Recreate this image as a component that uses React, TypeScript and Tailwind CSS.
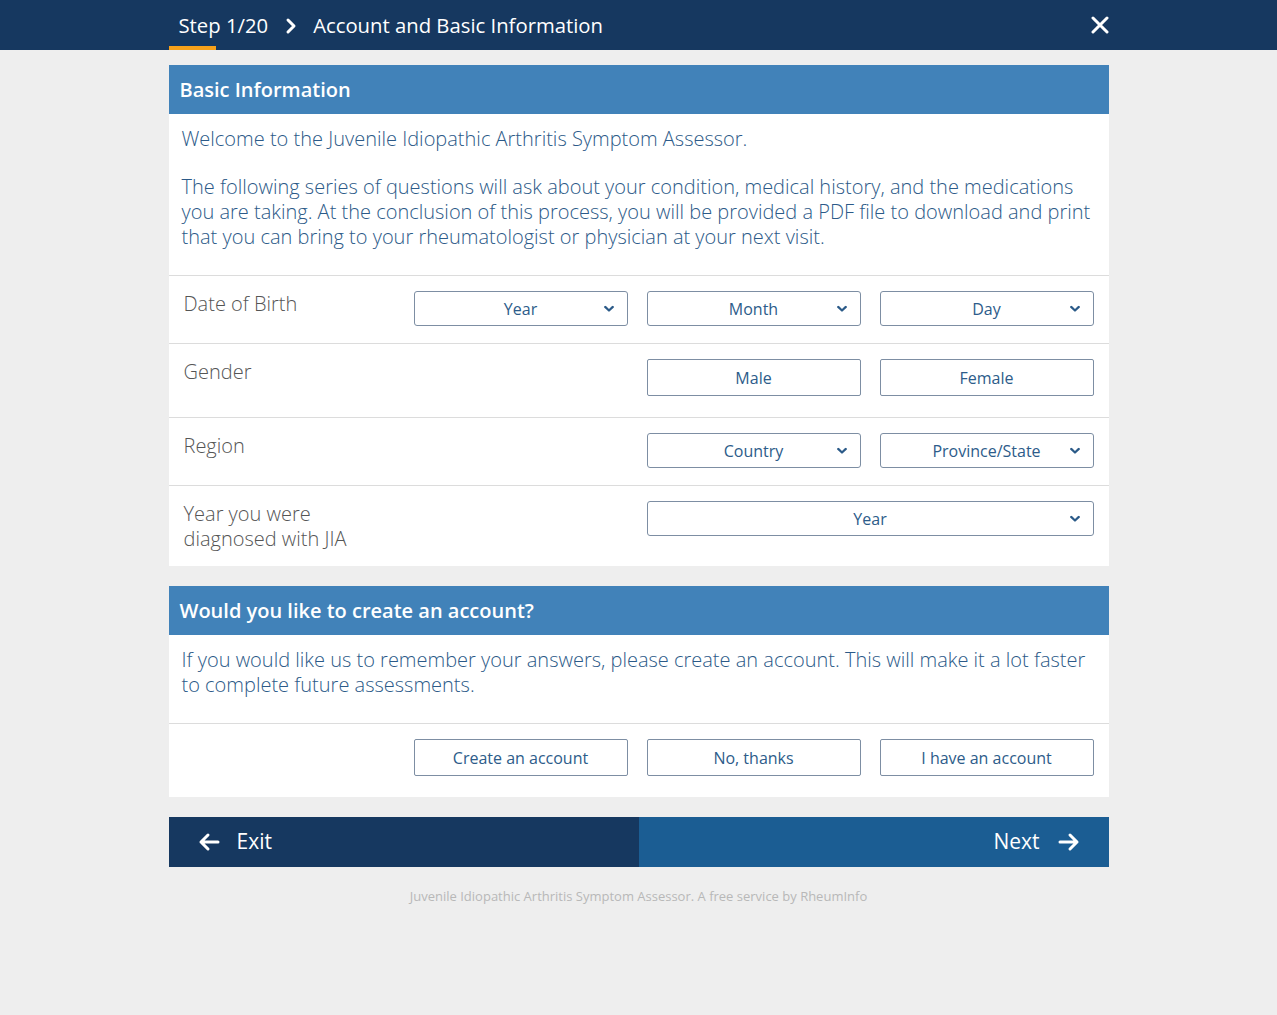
import React from "react";

const font = { fontFamily: '"Open Sans", "Noto Sans", sans-serif' };

function Chevron() {
  return (
    <svg width="10" height="7" viewBox="0 0 10 7" className="absolute right-[13px] top-1/2 -translate-y-1/2">
      <path d="M1.2 1.4 L5 5 L8.8 1.4" stroke="#2b5a88" strokeWidth="2.2" fill="none" strokeLinecap="round" strokeLinejoin="round" />
    </svg>
  );
}

function Select({ label }: { label: string }) {
  return (
    <div className="relative h-[35px] rounded-[3px] border border-[#7d8ea3] bg-white flex items-center justify-center text-[16px] font-normal text-[#2d5c8a]">
      <span>{label}</span>
      <Chevron />
    </div>
  );
}

function Btn({ label }: { label: string }) {
  return (
    <div className="h-[37px] rounded-[2px] border border-[#7d8ea3] bg-white flex items-center justify-center text-[16px] font-normal text-[#2d5c8a]">
      <span>{label}</span>
    </div>
  );
}

function Row({
  children,
  pb,
  last,
}: {
  children: React.ReactNode;
  pb: string;
  last?: boolean;
}) {
  return (
    <div className={`grid grid-cols-[214px_214px_214px_214px] gap-x-[19px] pl-[12px] pt-[15px] ${pb} ${last ? "" : "border-b border-[#dcdcdc]"}`}>
      {children}
    </div>
  );
}

function Label({ children }: { children: React.ReactNode }) {
  return <div className="pl-[3px] text-[20px] leading-[25px] font-light text-[#555555]">{children}</div>;
}

export default function App() {
  return (
    <div className="min-h-[1015px] bg-[#eeeeee]" style={font}>
      {/* Top bar */}
      <div className="h-[50px] bg-[#163860]">
        <div className="mx-auto w-[940px] h-full flex items-center relative">
          <div className="relative h-full flex items-center pl-[10px] pr-[9px] text-white text-[20.3px] pt-[1px]">
            <span>Step 1/20</span>
            <div className="absolute left-0 bottom-0 h-[4px] w-[47px] bg-[#f7a11a]" />
          </div>
          <svg width="12" height="18" viewBox="0 0 12 18" className="ml-[8px] mr-[16px] mt-[2px]">
            <path d="M3 3 L9 9 L3 15" stroke="white" strokeWidth="3" fill="none" strokeLinecap="round" strokeLinejoin="round" />
          </svg>
          <span className="text-white text-[20.3px] pt-[1px]">Account and Basic Information</span>
          <svg width="18" height="18" viewBox="0 0 18 18" className="absolute right-0 top-[16px]">
            <path d="M2 2 L16 16 M16 2 L2 16" stroke="white" strokeWidth="3" strokeLinecap="round" />
          </svg>
        </div>
      </div>

      <div className="mx-auto w-[940px] pt-[15px]">
        {/* Section 1 */}
        <div className="bg-white">
          <div className="h-[49px] bg-[#4182b9] flex items-center pl-[11px] text-white text-[20px] font-semibold">
            Basic Information
          </div>
          <div className="pl-[13px] pr-[12px] pt-[12px] pb-[26px] text-[20px] leading-[25px] font-light text-[#2c5a88] border-b border-[#dcdcdc]">
            <p className="mb-[23px]">Welcome to the Juvenile Idiopathic Arthritis Symptom Assessor.</p>
            <p>
              The following series of questions will ask about your condition, medical history, and the medications you are taking. At the conclusion of this process, you will be provided a PDF file to download and print that you can bring to your rheumatologist or physician at your next visit.
            </p>
          </div>
          <Row pb="pb-[17px]">
            <Label>Date of Birth</Label>
            <Select label="Year" />
            <Select label="Month" />
            <Select label="Day" />
          </Row>
          <Row pb="pb-[21px]">
            <Label>Gender</Label>
            <div />
            <Btn label="Male" />
            <Btn label="Female" />
          </Row>
          <Row pb="pb-[17px]">
            <Label>Region</Label>
            <div />
            <Select label="Country" />
            <Select label="Province/State" />
          </Row>
          <Row pb="pb-[15px]" last>
            <Label>
              Year you were
              <br />
              diagnosed with JIA
            </Label>
            <div />
            <div className="col-span-2">
              <Select label="Year" />
            </div>
          </Row>
        </div>

        {/* Section 2 */}
        <div className="bg-white mt-[20px]">
          <div className="h-[49px] bg-[#4182b9] flex items-center pl-[11px] text-white text-[20px] font-semibold">
            Would you like to create an account?
          </div>
          <div className="pl-[13px] pr-[12px] pt-[12px] pb-[26px] text-[20px] leading-[25px] font-light text-[#2c5a88] border-b border-[#dcdcdc]">
            <p>
              If you would like us to remember your answers, please create an account. This will make it a lot faster to complete future assessments.
            </p>
          </div>
          <Row pb="pb-[21px]" last>
            <div />
            <Btn label="Create an account" />
            <Btn label="No, thanks" />
            <Btn label="I have an account" />
          </Row>
        </div>

        {/* Nav */}
        <div className="mt-[20px] h-[50px] flex">
          <div className="w-1/2 bg-[#163860] flex items-center pl-[29px] text-white text-[21px]">
            <svg width="22" height="20" viewBox="0 0 22 20" className="mr-[17px]">
              <path d="M20 10 H3 M10 3 L3 10 L10 17" stroke="white" strokeWidth="3" fill="none" strokeLinecap="round" strokeLinejoin="round" />
            </svg>
            <span>Exit</span>
          </div>
          <div className="w-1/2 bg-[#1b5d93] flex items-center justify-end pr-[29px] text-white text-[21px]">
            <span>Next</span>
            <svg width="22" height="20" viewBox="0 0 22 20" className="ml-[18px]">
              <path d="M2 10 H19 M12 3 L19 10 L12 17" stroke="white" strokeWidth="3" fill="none" strokeLinecap="round" strokeLinejoin="round" />
            </svg>
          </div>
        </div>

        <div className="mt-[20px] text-center text-[13px] font-normal text-[#b8b8b8]">
          Juvenile Idiopathic Arthritis Symptom Assessor. A free service by RheumInfo
        </div>
      </div>
    </div>
  );
}
